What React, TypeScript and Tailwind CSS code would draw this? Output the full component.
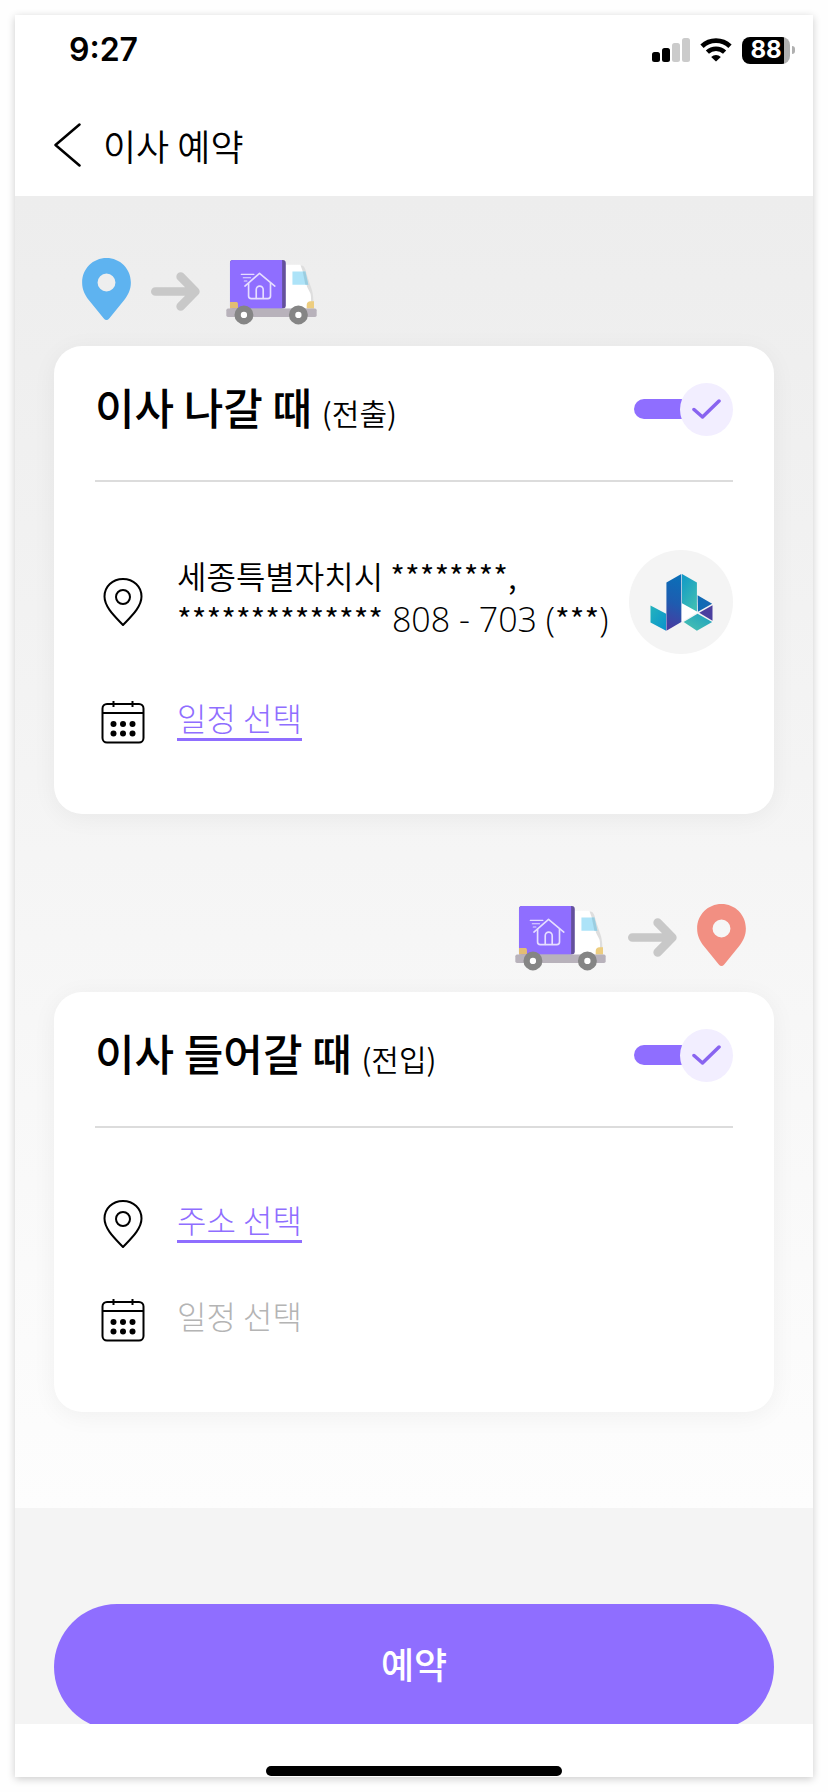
import { useState } from 'react';
import type { ReactNode } from 'react';

function StatusBar() {
  return (
    <div className="flex h-[70px] items-center justify-between pr-[18px] pl-[54px]">
      <span className="font-[Inter,sans-serif] text-[32px] leading-8 font-semibold">9:27</span>
      <div className="flex items-center gap-2.5">
        <svg className="h-6 w-[38px]" viewBox="0 0 38 24" aria-hidden="true">
          <rect x="0" y="14" width="8" height="10" rx="2.5" />
          <rect x="10" y="10" width="8" height="14" rx="2.5" />
          <rect x="20" y="5" width="8" height="19" rx="2.5" fill="#cbcbcb" />
          <rect x="30" y="0" width="8" height="24" rx="2.5" fill="#cbcbcb" />
        </svg>
        <svg className="h-6 w-8" viewBox="0 0 32 24" fill="none" stroke="#000" aria-hidden="true">
          <path d="M2 8.2a20.5 20.5 0 0 1 28 0" strokeWidth="4.8" />
          <path d="M7.4 14.2a12.5 12.5 0 0 1 17.2 0" strokeWidth="4.6" />
          <path d="M16 23.6l-4.8-4.7a7 7 0 0 1 9.6 0z" fill="#000" stroke="none" />
        </svg>
        <div className="flex items-center gap-0.5">
          <div className="flex h-[27px] w-12 items-center justify-center rounded-lg bg-linear-to-r from-black from-88% to-[#b0b0b0] to-88% font-[Inter,sans-serif] text-2xl leading-6 font-bold text-white">
            88
          </div>
          <div className="h-2 w-[3px] rounded-r-full bg-[#b0b0b0]" />
        </div>
      </div>
    </div>
  );
}

function MapPin({ color }: { color: string }) {
  return (
    <svg className="h-[62px] w-[49px]" viewBox="0 0 147 187" aria-hidden="true">
      <path
        fillRule="evenodd"
        fill={color}
        d="M73.500 0C33 0 0 32 0 74c0 22 9 38 20 53l46 56c4 5 11 5 15 0l46-56c11-15 20-31 20-53C147 32 114 0 73.500 0zM73.500 47a27 27 0 1 1 0 54a27 27 0 0 1 0-54z"
      />
    </svg>
  );
}

function Arrow({ className }: { className: string }) {
  return (
    <svg
      className={`h-[39px] w-[49px] ${className}`}
      viewBox="0 0 147 117"
      fill="none"
      stroke="#c8c8c8"
      strokeWidth="26"
      strokeLinecap="round"
      strokeLinejoin="round"
      aria-hidden="true"
    >
      <path d="M13 58.500h118M89 14l44 44.500L89 103" />
    </svg>
  );
}

function Truck() {
  return (
    <svg className="h-[65px] w-[91px]" viewBox="528 60 274 195" aria-hidden="true">
      <path d="M740 76h15c8 0 12 8 17 30l14 42c4 12 6 30 6 58h-50z" fill="#dedede" />
      <path d="M708 74h44l14 40 6 26 10 20c3 8 3 28 0 46h-74z" fill="#fff" />
      <rect x="540" y="60" width="168" height="146" rx="9" fill="#64509c" />
      <path d="M549 60h148v146H540V69c0-5 4-9 9-9z" fill="#8f6eff" />
      <path d="M728 94h39l9 40h-48z" fill="#ade3f8" />
      <path d="M767 94l9 40h-9l-8-40z" fill="#9bcde0" />
      <path d="M540 186h18c4 0 6 2 6 6v14h-24z" fill="#e3bd74" />
      <path d="M771 206v-11c0-7 5-11 11-11h11v22z" fill="#edcd7f" />
      <rect x="529" y="206" width="272" height="25" rx="5" fill="#b8b2bb" />
      <circle cx="582" cy="225" r="19" fill="#fff" stroke="#858585" strokeWidth="19" />
      <circle cx="746" cy="225" r="19" fill="#fff" stroke="#858585" strokeWidth="19" />
      <g fill="none" stroke="#e6deff" strokeWidth="5" strokeLinecap="round" strokeLinejoin="round">
        <path d="M585 138l44-38 46 38" />
        <path d="M596 130v38q0 8 8 8h50q8 0 8-8v-38" />
        <path d="M619 175v-26a10 10 0 0 1 21 0v26" />
        <path d="M574 103h38M580 113h22M583 123h8" strokeWidth="3.500" />
      </g>
    </svg>
  );
}

function PinOutline() {
  return (
    <svg className="h-12 w-11 shrink-0" viewBox="0 0 44 48" fill="none" stroke="#000" strokeWidth="2" aria-hidden="true">
      <path d="M22 47C14 38.500 3.500 29 3.500 18.500C3.500 8.500 11.500 1 22 1s18.500 7.500 18.500 17.500C40.500 29 30 38.500 22 47z" />
      <circle cx="22" cy="19" r="7" />
    </svg>
  );
}

function CalendarOutline() {
  return (
    <svg className="size-11 shrink-0" viewBox="0 0 44 44" fill="none" stroke="#000" strokeWidth="2" aria-hidden="true">
      <rect x="1.500" y="4" width="41" height="38.500" rx="4.500" />
      <path d="M1.500 13h41M12.500 1v6M31.500 1v6" />
      <g fill="#000" stroke="none">
        <circle cx="12.500" cy="24" r="3" />
        <circle cx="22" cy="24" r="3" />
        <circle cx="31.500" cy="24" r="3" />
        <circle cx="12.500" cy="33.500" r="3" />
        <circle cx="22" cy="33.500" r="3" />
        <circle cx="31.500" cy="33.500" r="3" />
      </g>
    </svg>
  );
}

function ApartmentLogo() {
  return (
    <div className="flex size-[104px] shrink-0 items-center justify-center rounded-full bg-[#f4f4f4]">
      <svg className="h-[57px] w-[63px]" viewBox="630 126 189 172" aria-hidden="true">
        <defs>
          <linearGradient id="wing" x1="0" y1="0" x2="1" y2="1">
            <stop offset="0" stopColor="#24b4bd" />
            <stop offset="1" stopColor="#0a92cc" />
          </linearGradient>
          <linearGradient id="tower" x1="0.500" y1="0" x2="0.400" y2="1">
            <stop offset="0" stopColor="#0a6fb8" />
            <stop offset="0.500" stopColor="#1e5cb0" />
            <stop offset="1" stopColor="#4a3aa0" />
          </linearGradient>
          <linearGradient id="side" x1="0" y1="0" x2="0.600" y2="1">
            <stop offset="0" stopColor="#0f98c8" />
            <stop offset="1" stopColor="#3cbcb4" />
          </linearGradient>
          <linearGradient id="roof" x1="0" y1="0" x2="1" y2="0">
            <stop offset="0" stopColor="#0d6bb5" />
            <stop offset="1" stopColor="#1a68b4" />
          </linearGradient>
          <linearGradient id="base" x1="0" y1="1" x2="1" y2="0">
            <stop offset="0" stopColor="#4cc4b0" />
            <stop offset="1" stopColor="#1c9fc0" />
          </linearGradient>
        </defs>
        <path d="M725 214l49 27-49 29z" fill="#fff" />
        <path d="M631 221l47 25v51l-47-25z" fill="url(#wing)" />
        <path d="M679 152l45-26v145l-45 26z" fill="url(#tower)" />
        <path d="M726 126l45 26v87l-45-25z" fill="url(#side)" />
        <path d="M773 190l44 26-43 24z" fill="url(#roof)" />
        <path d="M778 243l40-23v47z" fill="#4a3f9f" />
        <path d="M731 271l42-25 44 25-46 26z" fill="url(#base)" />
      </svg>
    </div>
  );
}

type ToggleProps = {
  label: string;
};

function Toggle({ label }: ToggleProps) {
  const [on, setOn] = useState(true);

  return (
    <label className="flex cursor-pointer items-center">
      <input
        type="checkbox"
        role="switch"
        className="sr-only"
        aria-label={label}
        checked={on}
        onChange={(e) => setOn(e.target.checked)}
      />
      <span className={`h-5 w-[60px] rounded-l-full ${on ? 'bg-[#8f6eff]' : 'bg-gray-300'}`} />
      <span className="-ml-3.5 flex size-[53px] items-center justify-center rounded-full bg-[#f2eeff]">
        <svg className="h-5 w-[29px]" viewBox="0 0 29 20" fill="none" aria-hidden="true">
          <path
            d="M2 10.500l8.500 7.500L27 2"
            stroke={on ? '#8964f0' : '#d1d5db'}
            strokeWidth="3.500"
            strokeLinecap="round"
            strokeLinejoin="round"
          />
        </svg>
      </span>
    </label>
  );
}

type MoveCardProps = {
  title: string;
  type: string;
  children: ReactNode;
};

function MoveCard({ title, type, children }: MoveCardProps) {
  return (
    <section className="rounded-[28px] bg-white px-[41px] pb-[70px] shadow-[0_4px_24px_rgba(0,0,0,0.05)]">
      <div className="flex h-[136px] items-center justify-between border-b-2 border-[#dcdcdc] pb-2">
        <h2 className="text-[43px] leading-[52px] font-medium whitespace-nowrap">
          {title} <span className="text-[30px] font-[350]">({type})</span>
        </h2>
        <Toggle label={title} />
      </div>
      <div className="flex flex-col gap-[46px] pt-[68px]">{children}</div>
    </section>
  );
}

const selectClass = 'mb-1 border-b-[3px] pb-[3px] text-[32px] leading-9 font-light';

export default function App() {
  return (
    <div className="min-h-screen bg-[#fefefe] p-[15px] font-['Noto_Sans_CJK_KR',sans-serif] text-black">
      <div className="flex flex-col bg-white shadow-[0_2px_8px_rgba(0,0,0,0.2)]">
        <StatusBar />
        <header className="flex h-[111px] items-center gap-[22px] px-[39px] pt-2">
          <button type="button" aria-label="뒤로" className="cursor-pointer">
            <svg className="h-11 w-[27px]" viewBox="0 0 27 44" fill="none" stroke="#000" strokeWidth="2.500" aria-hidden="true">
              <path d="M25.500 1.500L1.500 22l24 20.500" strokeLinecap="round" strokeLinejoin="round" />
            </svg>
          </button>
          <h1 className="text-4xl font-[350]">이사 예약</h1>
        </header>

        <main className="bg-linear-to-b from-[#ededed] to-[#fdfdfd] px-[39px] pt-[62px] pb-24">
          <div className="mb-[21px] flex h-[67px] items-start pl-7">
            <MapPin color="#5eb3f0" />
            <Arrow className="mt-3.5 mr-[26px] ml-5" />
            <div className="pt-0.5">
              <Truck />
            </div>
          </div>
          <MoveCard title="이사 나갈 때" type="전출">
            <div className="flex items-center gap-8 pl-1.5">
              <PinOutline />
              <p className="min-w-0 flex-1 pb-2.5 text-[32px] leading-[43px] font-[350] whitespace-nowrap">
                세종특별자치시 ********,
                <br />
                **************
                <span className="font-['Open_Sans',sans-serif] text-[34px] font-light"> 808 - 703 (</span>
                ***
                <span className="font-['Open_Sans',sans-serif] text-[34px] font-light">)</span>
              </p>
              <ApartmentLogo />
            </div>
            <div className="flex h-11 items-center gap-8 pl-1.5">
              <CalendarOutline />
              <button type="button" className={`${selectClass} cursor-pointer border-[#8f6eff] text-[#8f6eff]`}>
                일정 선택
              </button>
            </div>
          </MoveCard>

          <div className="mt-[90px] mb-[21px] flex h-[67px] items-start justify-end pr-7">
            <div className="pt-0.5">
              <Truck />
            </div>
            <Arrow className="mt-3.5 mr-5 ml-[22px]" />
            <MapPin color="#f28f82" />
          </div>
          <MoveCard title="이사 들어갈 때" type="전입">
            <div className="flex h-14 items-center gap-8 pl-1.5">
              <PinOutline />
              <button type="button" className={`${selectClass} cursor-pointer border-[#8f6eff] text-[#8f6eff]`}>
                주소 선택
              </button>
            </div>
            <div className="flex h-11 items-center gap-8 pl-1.5">
              <CalendarOutline />
              <button type="button" disabled className={`${selectClass} border-transparent text-[#b4b4b4]`}>
                일정 선택
              </button>
            </div>
          </MoveCard>
        </main>

        <footer>
          <div className="bg-[#f4f4f4] px-[39px] pt-24">
            <div className="h-[120px] overflow-hidden">
              <button
                type="button"
                className="h-[126px] w-full cursor-pointer rounded-full bg-[#8f6eff] pb-2 text-4xl font-medium text-white"
              >
                예약
              </button>
            </div>
          </div>
          <div className="flex h-[53px] items-end justify-center pb-px">
            <div className="h-2.5 w-[296px] rounded-full bg-black" />
          </div>
        </footer>
      </div>
    </div>
  );
}
